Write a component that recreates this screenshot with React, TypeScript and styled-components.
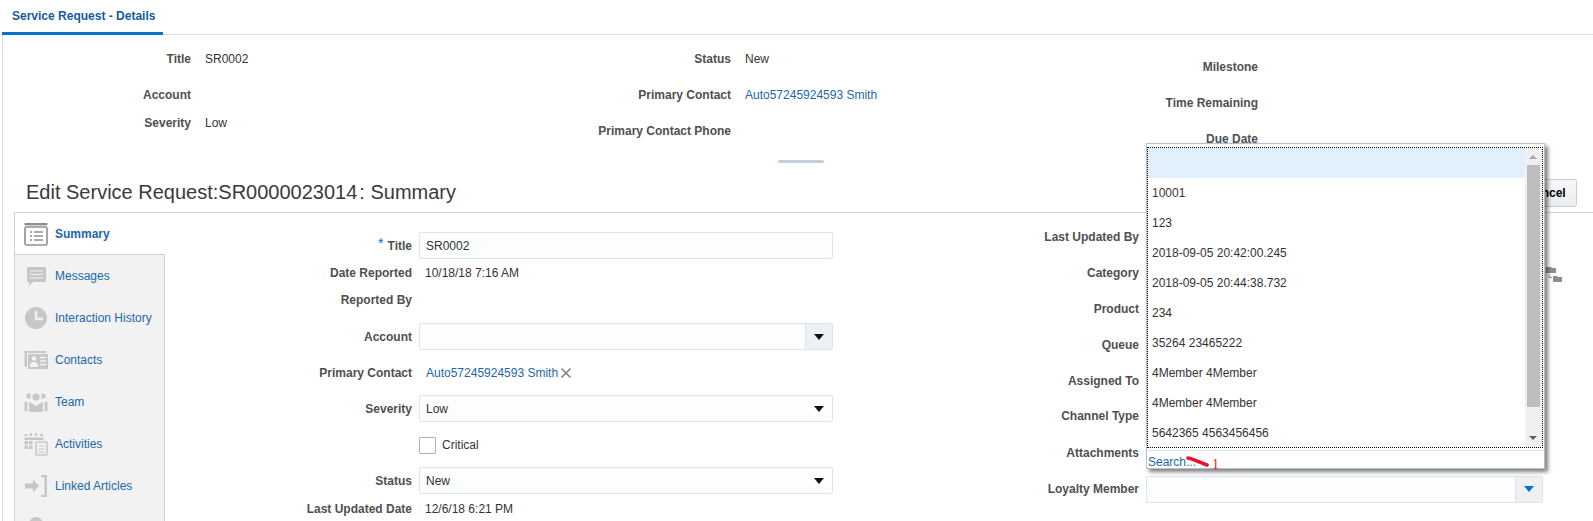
import styled, { createGlobalStyle } from "styled-components";

const GlobalStyle = createGlobalStyle`
  html, body {
    margin: 0;
    padding: 0;
    height: 100%;
    overflow: hidden;
    background: #fff;
    font-family: "Liberation Sans", Arial, sans-serif;
    font-size: 12px;
    color: #333;
  }
`;

const Page = styled.div`
  position: relative;
  width: 1593px;
  height: 521px;
  overflow: hidden;
`;

const TabBar = styled.div`
  height: 34px;
  margin-left: 2px;
  border-bottom: 1px solid #d6dfe6;
`;

const ActiveTab = styled.div`
  width: 151px;
  height: 32px;
  padding-left: 10px;
  line-height: 32px;
  border-bottom: 3px solid #0572ce;
  font-weight: bold;
  color: #145c9e;
`;

const Frame = styled.div`
  margin-left: 2px;
  border-left: 1px solid #d6dfe6;
  height: 486px;
`;

const Details = styled.div`
  display: flex;
  height: 125px;
`;

const DetailColumn = styled.div<{ $width: number; $top: number }>`
  width: ${(p) => p.$width}px;
  padding-top: ${(p) => p.$top}px;
  box-sizing: border-box;
`;

const DetailRow = styled.div<{ $height: number; $label: number }>`
  display: grid;
  grid-template-columns: ${(p) => p.$label}px 1fr;
  column-gap: 14px;
  height: ${(p) => p.$height}px;
`;

const Label = styled.div`
  font-weight: bold;
  color: #4f4f4f;
  text-align: right;
  white-space: nowrap;
  line-height: 18px;
`;

const Value = styled.div`
  color: #333;
  line-height: 18px;
  white-space: nowrap;
`;

const FormValue = styled(Value)`
  padding-left: 6px;
`;

const LinkValue = styled.a`
  color: #1a68ab;
  line-height: 18px;
  white-space: nowrap;
`;

const HandleRow = styled.div`
  display: flex;
  justify-content: center;
  height: 20px;
  padding-left: 5px;
`;

const Handle = styled.div`
  width: 46px;
  height: 3px;
  border-radius: 2px;
  background: #c9cede;
`;

const HeadingRow = styled.div`
  display: flex;
  align-items: flex-start;
  justify-content: space-between;
  height: 32px;
  margin-left: 11px;
  padding: 0 16px 0 12px;
  border-bottom: 1px solid #d0d3d6;
`;

const Heading = styled.h1`
  margin: 0;
  font-size: 20px;
  font-weight: normal;
  line-height: 25px;
  color: #3a3a3a;
`;

const HeadingSuffix = styled.span`
  margin-left: 2px;
`;

const CancelButton = styled.button`
  height: 28px;
  width: 62px;
  margin-top: -1px;
  border: 1px solid #c4ced7;
  border-radius: 3px;
  background: linear-gradient(#f7f8f9, #e9edf0);
  font-family: inherit;
  font-size: 12px;
  font-weight: bold;
  color: #000;
`;

const Main = styled.div`
  display: flex;
  margin-left: 11px;
  height: 308px;
  overflow: hidden;
`;

const SideTabs = styled.div`
  flex: none;
  width: 151px;
  box-sizing: border-box;
  height: 360px;
`;

const SideTab = styled.div<{ $active?: boolean }>`
  display: flex;
  align-items: center;
  gap: 7px;
  height: 42px;
  padding-left: 9px;
  box-sizing: border-box;
  background: ${(p) => (p.$active ? "#fff" : "#f2f2f2")};
  border-left: 1px solid #cfd1d3;
  border-right: ${(p) => (p.$active ? "none" : "1px solid #cfd1d3")};
  border-bottom: ${(p) => (p.$active ? "1px solid #cfd1d3" : "none")};
  color: #1a68ab;
  font-weight: ${(p) => (p.$active ? "bold" : "normal")};
  white-space: nowrap;
`;

const IconSlot = styled.svg`
  flex: none;
  width: 24px;
  height: 24px;
`;

const FormColumn = styled.div<{ $width: number; $top: number }>`
  flex: none;
  width: ${(p) => p.$width}px;
  padding-top: ${(p) => p.$top}px;
  box-sizing: border-box;
`;

const FormRow = styled.div<{ $height: number; $label: number }>`
  display: grid;
  grid-template-columns: ${(p) => p.$label}px 1fr;
  column-gap: 7px;
  align-items: center;
  height: ${(p) => p.$height}px;
`;

const Required = styled.span`
  color: #0572ce;
  font-weight: normal;
  font-size: 14px;
  margin-right: 4px;
  vertical-align: 2px;
  line-height: 10px;
`;

const Field = styled.div`
  display: flex;
  align-items: center;
  justify-content: space-between;
  height: 27px;
  box-sizing: border-box;
  padding-left: 6px;
  border: 1px solid #dfe4ea;
  border-radius: 2px;
  background: #fcfdfe;
  color: #333;
`;

const TitleField = styled(Field)`
  padding-top: 2px;
`;

const TitleLabel = styled(Label)`
  padding-top: 2px;
`;

const FieldButton = styled.div<{ $framed?: boolean }>`
  display: flex;
  align-items: center;
  justify-content: center;
  width: 27px;
  height: 100%;
  box-sizing: border-box;
  border-left: ${(p) => (p.$framed ? "1px solid #dfe4ea" : "none")};
  background: ${(p) => (p.$framed ? "#eef1f3" : "transparent")};
`;

const Arrow = styled.span<{ $color: string }>`
  width: 0;
  height: 0;
  border-left: 5px solid transparent;
  border-right: 5px solid transparent;
  border-top: 6px solid ${(p) => p.$color};
`;

const ContactCell = styled.div`
  display: flex;
  align-items: center;
  gap: 1px;
  padding-left: 7px;
`;

const CheckCell = styled.div`
  display: flex;
  align-items: center;
  gap: 6px;
`;

const CheckBox = styled.span`
  width: 15px;
  height: 15px;
  border: 1px solid #a9b4bf;
  border-radius: 1px;
  background: #fff;
`;

const CategoryCell = styled.div`
  position: relative;
`;

const TreeIcon = styled.svg`
  position: absolute;
  left: 400px;
  top: -6px;
  width: 16px;
  height: 15px;
`;

const Popup = styled.div`
  position: absolute;
  left: 1146px;
  top: 143px;
  width: 399px;
  height: 326px;
  box-sizing: border-box;
  padding-top: 3px;
  background: #fff;
  border: 1px solid #b5c0cb;
  box-shadow: 3px 3px 4px rgba(0, 0, 0, 0.5);
`;

const ListBox = styled.div`
  display: flex;
  height: 301px;
  width: 396px;
  box-sizing: border-box;
  border: 1px dotted #000;
`;

const Options = styled.div`
  flex: 1;
`;

const Option = styled.div<{ $selected?: boolean }>`
  height: 30px;
  line-height: 30px;
  padding-left: 4px;
  color: #333;
  background: ${(p) => (p.$selected ? "#e1f0fd" : "transparent")};
`;

const ScrollBar = styled.div`
  position: relative;
  flex: none;
  width: 17px;
  background: #f0f0f0;
`;

const ScrollThumb = styled.div`
  position: absolute;
  left: 2px;
  top: 17px;
  width: 13px;
  height: 242px;
  background: #bdbdbd;
`;

const ScrollUp = styled.span`
  position: absolute;
  left: 4px;
  top: 7px;
  border-left: 4px solid transparent;
  border-right: 4px solid transparent;
  border-bottom: 4px solid #a8a8a8;
`;

const ScrollDown = styled.span`
  position: absolute;
  left: 4px;
  bottom: 7px;
  border-left: 4px solid transparent;
  border-right: 4px solid transparent;
  border-top: 4px solid #606060;
`;

const SearchRow = styled.div`
  position: relative;
  margin-top: 2px;
  height: 17px;
  line-height: 22px;
  padding-left: 1px;
  border-top: 1px solid #d6dfe6;
  color: #1a68ab;
`;

const Scribble = styled.svg`
  position: absolute;
  left: 39px;
  top: 5px;
  width: 24px;
  height: 11px;
`;

const Mark = styled.span`
  position: absolute;
  left: 65px;
  top: 3px;
  font-family: "Liberation Serif", serif;
  font-size: 14px;
  color: #ee1133;
`;

const iconFill = "#c5c7c9";

const SummaryIcon = () => (
  <IconSlot viewBox="0 0 24 24">
    <rect x="0.5" y="1" width="23" height="2.4" fill="#8d9093" />
    <rect x="1" y="5" width="22" height="18" rx="1.5" fill="#fff" stroke="#8d9093" strokeWidth="1.6" />
    <path d="M6 10h2M10 10h9M6 14h2M10 14h9M6 18h2M10 18h9" stroke="#8d9093" strokeWidth="1.3" />
  </IconSlot>
);

const MessagesIcon = () => (
  <IconSlot viewBox="0 0 24 24">
    <path d="M4 3h17a1 1 0 0 1 1 1v13a1 1 0 0 1-1 1H9l-4 4v-4H4a1 1 0 0 1-1-1V4a1 1 0 0 1 1-1z" fill={iconFill} />
    <path d="M6 7h13M6 10.5h13M6 14h13" stroke="#f2f2f2" strokeWidth="1" />
  </IconSlot>
);

const ClockIcon = () => (
  <IconSlot viewBox="0 0 24 24">
    <circle cx="12" cy="12" r="11" fill={iconFill} />
    <path d="M12 5v8h7" fill="none" stroke="#f2f2f2" strokeWidth="2.4" />
  </IconSlot>
);

const ContactsIcon = () => (
  <IconSlot viewBox="0 0 24 24">
    <path d="M0.5 3h22v2H3v14H0.5z" fill={iconFill} />
    <rect x="4" y="6" width="20" height="15" fill={iconFill} />
    <circle cx="10" cy="10.5" r="2.2" fill="#f2f2f2" />
    <path d="M6 19v-3l3-2h2l3 2v3z" fill="#f2f2f2" />
    <path d="M16 9.5h6M16 13h6M16 16.5h6" stroke="#f2f2f2" strokeWidth="1.5" />
  </IconSlot>
);

const TeamIcon = () => (
  <IconSlot viewBox="0 0 24 24">
    <circle cx="12" cy="7" r="3.6" fill={iconFill} />
    <path d="M6 12l6 4 6-4 1 1v9H5v-9z" fill={iconFill} />
    <path d="M6.5 3.5H5a2.6 2.6 0 0 0 0 5.2h1.5zM17.5 3.5H19a2.6 2.6 0 0 1 0 5.2h-1.5z" fill={iconFill} />
    <path d="M0.5 12h3v9h-3zM20.5 12h3v9h-3z" fill={iconFill} />
  </IconSlot>
);

const ActivitiesIcon = () => (
  <IconSlot viewBox="0 0 24 24">
    <path d="M0.5 2h3v2h-3zM6 1h2v3H6zM11 1h2v3h-2zM16 2h3v2h-3z" fill={iconFill} />
    <path d="M0.5 5.5h19V8h-19z" fill={iconFill} />
    <path d="M0.5 9h3.5v3.5H0.5zM5 9h3.5v3.5H5zM0.5 13.5h3.5V17H0.5zM5 13.5h3.5V17H5z" fill={iconFill} />
    <rect x="12" y="10" width="11" height="13" rx="1" fill="#f2f2f2" stroke={iconFill} strokeWidth="1.6" />
    <path d="M14.5 14h6M14.5 17h6M14.5 20h6" stroke={iconFill} strokeWidth="1.2" />
  </IconSlot>
);

const LinkedIcon = () => (
  <IconSlot viewBox="0 0 24 24">
    <path d="M1 9.5h8V5.5l6 6.5-6 6.5v-4H1z" fill={iconFill} />
    <path d="M17 1h6v22h-6v-2.2h3.4V3.2H17z" fill={iconFill} />
  </IconSlot>
);

const DomeIcon = () => (
  <IconSlot viewBox="0 0 24 24">
    <circle cx="12" cy="8" r="7" fill={iconFill} />
  </IconSlot>
);

const CrossIcon = () => (
  <svg width="14" height="14" viewBox="0 0 14 14">
    <path d="M2.5 2.5l9 9M11.5 2.5l-9 9" stroke="#7d8286" strokeWidth="1.6" />
  </svg>
);

const sideTabs = [
  { name: "Messages", icon: <MessagesIcon /> },
  { name: "Interaction History", icon: <ClockIcon /> },
  { name: "Contacts", icon: <ContactsIcon /> },
  { name: "Team", icon: <TeamIcon /> },
  { name: "Activities", icon: <ActivitiesIcon /> },
  { name: "Linked Articles", icon: <LinkedIcon /> },
  { name: "", icon: <DomeIcon /> },
];

const options = [
  "",
  "10001",
  "123",
  "2018-09-05 20:42:00.245",
  "2018-09-05 20:44:38.732",
  "234",
  "35264 23465222",
  "4Member 4Member",
  "4Member 4Member",
  "5642365 4563456456",
];

const rightRows = [
  { name: "Last Updated By", height: 35 },
  { name: "Category", height: 37 },
  { name: "Product", height: 35 },
  { name: "Queue", height: 37 },
  { name: "Assigned To", height: 35 },
  { name: "Channel Type", height: 36 },
  { name: "Attachments", height: 37 },
];

export default function App() {
  return (
    <Page>
      <GlobalStyle />
      <TabBar>
        <ActiveTab>Service Request - Details</ActiveTab>
      </TabBar>
      <Frame>
        <Details>
          <DetailColumn $width={540} $top={15}>
            <DetailRow $height={36} $label={188}>
              <Label>Title</Label>
              <Value>SR0002</Value>
            </DetailRow>
            <DetailRow $height={28} $label={188}>
              <Label>Account</Label>
            </DetailRow>
            <DetailRow $height={18} $label={188}>
              <Label>Severity</Label>
              <Value>Low</Value>
            </DetailRow>
          </DetailColumn>
          <DetailColumn $width={527} $top={15}>
            <DetailRow $height={36} $label={188}>
              <Label>Status</Label>
              <Value>New</Value>
            </DetailRow>
            <DetailRow $height={36} $label={188}>
              <Label>Primary Contact</Label>
              <LinkValue>Auto57245924593 Smith</LinkValue>
            </DetailRow>
            <DetailRow $height={18} $label={188}>
              <Label>Primary Contact Phone</Label>
            </DetailRow>
          </DetailColumn>
          <DetailColumn $width={400} $top={23}>
            <DetailRow $height={36} $label={188}>
              <Label>Milestone</Label>
            </DetailRow>
            <DetailRow $height={36} $label={188}>
              <Label>Time Remaining</Label>
            </DetailRow>
            <DetailRow $height={18} $label={188}>
              <Label>Due Date</Label>
            </DetailRow>
          </DetailColumn>
        </Details>
        <HandleRow>
          <Handle />
        </HandleRow>
        <HeadingRow>
          <Heading>
            Edit Service Request:SR0000023014<HeadingSuffix>: Summary</HeadingSuffix>
          </Heading>
          <CancelButton>Cancel</CancelButton>
        </HeadingRow>
        <Main>
          <SideTabs>
            <SideTab $active>
              <SummaryIcon />
              Summary
            </SideTab>
            {sideTabs.map((tab) => (
              <SideTab key={tab.name}>
                {tab.icon}
                {tab.name}
              </SideTab>
            ))}
          </SideTabs>
          <FormColumn $width={668} $top={14}>
            <FormRow $height={36} $label={247}>
              <TitleLabel>
                <Required>*</Required>Title
              </TitleLabel>
              <TitleField>SR0002</TitleField>
            </FormRow>
            <FormRow $height={20} $label={247}>
              <Label>Date Reported</Label>
              <FormValue>10/18/18 7:16 AM</FormValue>
            </FormRow>
            <FormRow $height={34} $label={247}>
              <Label>Reported By</Label>
            </FormRow>
            <FormRow $height={39} $label={247}>
              <Label>Account</Label>
              <Field>
                <span />
                <FieldButton $framed>
                  <Arrow $color="#111" />
                </FieldButton>
              </Field>
            </FormRow>
            <FormRow $height={34} $label={247}>
              <Label>Primary Contact</Label>
              <ContactCell>
                <LinkValue>Auto57245924593 Smith</LinkValue>
                <CrossIcon />
              </ContactCell>
            </FormRow>
            <FormRow $height={37} $label={247}>
              <Label>Severity</Label>
              <Field>
                Low
                <FieldButton>
                  <Arrow $color="#111" />
                </FieldButton>
              </Field>
            </FormRow>
            <FormRow $height={36} $label={247}>
              <span />
              <CheckCell>
                <CheckBox />
                Critical
              </CheckCell>
            </FormRow>
            <FormRow $height={35} $label={247}>
              <Label>Status</Label>
              <Field>
                New
                <FieldButton>
                  <Arrow $color="#111" />
                </FieldButton>
              </Field>
            </FormRow>
            <FormRow $height={22} $label={247}>
              <Label>Last Updated Date</Label>
              <FormValue>12/6/18 6:21 PM</FormValue>
            </FormRow>
          </FormColumn>
          <FormColumn $width={710} $top={6}>
            {rightRows.map((row) => (
              <FormRow key={row.name} $height={row.height} $label={306}>
                <Label>{row.name}</Label>
                {row.name === "Category" ? (
                  <CategoryCell>
                    <TreeIcon viewBox="0 0 16 15">
                      <path d="M0 0h5l1 1h4v5H0z" fill="#8b8f93" />
                      <path d="M3 7.5v3h3" fill="none" stroke="#8b8f93" />
                      <path d="M7 9h4l1 1h4v5H7z" fill="#8b8f93" />
                    </TreeIcon>
                  </CategoryCell>
                ) : (
                  <span />
                )}
              </FormRow>
            ))}
            <FormRow $height={36} $label={306}>
              <Label>Loyalty Member</Label>
              <Field>
                <span />
                <FieldButton $framed>
                  <Arrow $color="#0572ce" />
                </FieldButton>
              </Field>
            </FormRow>
          </FormColumn>
        </Main>
      </Frame>
      <Popup>
        <ListBox>
          <Options>
            {options.map((option, index) => (
              <Option key={index} $selected={index === 0}>
                {option}
              </Option>
            ))}
          </Options>
          <ScrollBar>
            <ScrollUp />
            <ScrollThumb />
            <ScrollDown />
          </ScrollBar>
        </ListBox>
        <SearchRow>
          Search...
          <Scribble viewBox="0 0 24 11">
            <path d="M2 2c6 1 13 5 19 7" fill="none" stroke="#e8102a" strokeWidth="3.6" strokeLinecap="round" />
          </Scribble>
          <Mark>1</Mark>
        </SearchRow>
      </Popup>
    </Page>
  );
}
